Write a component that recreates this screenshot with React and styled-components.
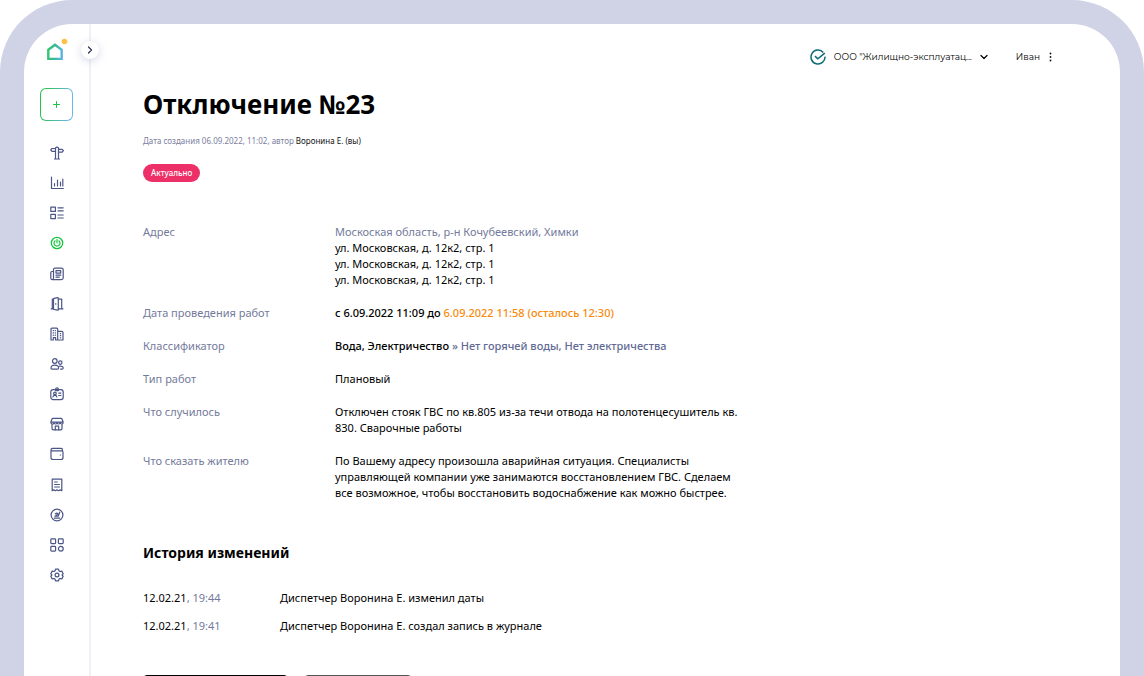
import React from "react";
import styled, { createGlobalStyle } from "styled-components";

const GlobalStyle = createGlobalStyle`
  *, *::before, *::after { box-sizing: border-box; }
  body {
    margin: 0;
    background: #fff;
    color: #000;
    font: 400 11px/16px "Noto Sans", sans-serif;
  }
  h1, h2, p, dl, dd, ul { margin: 0; padding: 0; }
  button { font: inherit; cursor: pointer; }
`;

const Frame = styled.div`
  height: 100vh;
  overflow: hidden;
  padding: 24px 24px 0;
  border-radius: 72px 72px 0 0;
  background: #d0d3e6;
`;

const Panel = styled.div`
  display: flex;
  min-height: 100%;
  border-radius: 48px 48px 0 0;
  background: #fff;
`;

const Sidebar = styled.aside`
  position: relative;
  flex: 0 0 67px;
  display: flex;
  flex-direction: column;
  align-items: center;
  padding-top: 14px;
  border-right: 2px solid #f0f0f7;
`;

const LogoLink = styled.a`
  display: block;
  width: 22px;
  height: 24px;
  svg { display: block; }
`;

const CollapseButton = styled.button`
  position: absolute;
  top: 17px;
  right: -10px;
  display: grid;
  place-items: center;
  width: 18px;
  height: 18px;
  padding: 0;
  border: 0;
  border-radius: 50%;
  background: #fff;
  color: #2b3157;
  box-shadow: 0 2px 8px rgba(96, 104, 168, 0.25);
`;

const AddButton = styled.button`
  display: grid;
  place-items: center;
  width: 33px;
  height: 33px;
  margin-top: 26px;
  padding: 0;
  border: 1px solid transparent;
  border-radius: 6px;
  background:
    linear-gradient(#fff, #fff) padding-box,
    linear-gradient(100deg, #27c24c 10%, #6db7ea 90%) border-box;
  color: #1fbf4a;
`;

const NavList = styled.ul`
  display: flex;
  flex-direction: column;
  justify-content: space-between;
  height: 438px;
  margin-top: 24px;
  list-style: none;
`;

const NavLink = styled.a`
  display: grid;
  place-items: center;
  width: 16px;
  height: 16px;
  color: ${({ $active }) => ($active ? "#17c440" : "#4b5586")};
`;

const Main = styled.main`
  flex: 1;
  min-width: 0;
  padding: 24px 67px 0 52px;
`;

const Header = styled.header`
  display: flex;
  justify-content: flex-end;
  align-items: center;
  gap: 28px;
  height: 18px;
  font: 400 9px/16px Montserrat, Inter, sans-serif;
`;

const HeaderButton = styled.button`
  display: flex;
  align-items: center;
  gap: 8px;
  padding: 0;
  border: 0;
  background: none;
  color: #000;
  white-space: nowrap;
`;

const Title = styled.h1`
  margin-top: 20px;
  font-size: 26px;
  line-height: 36px;
  font-weight: 700;
`;

const Meta = styled.p`
  margin-top: 13px;
  font-size: 8px;
  line-height: 12px;
  color: #7b80a0;
`;

const Author = styled.span`
  color: #111;
`;

const Badge = styled.span`
  display: block;
  width: fit-content;
  margin-top: 17px;
  padding: 0 8px;
  border-radius: 9px;
  background: #ee3068;
  color: #fff;
  font-size: 8px;
  line-height: 18px;
  font-weight: 500;
`;

const Details = styled.dl`
  display: flex;
  flex-direction: column;
  gap: 17px;
  margin-top: 42px;
`;

const DetailRow = styled.div`
  display: grid;
  grid-template-columns: 192px minmax(0, 408px);
`;

const Term = styled.dt`
  color: #747a9b;
`;

const Value = styled.dd`
  font-weight: ${({ $strong }) => ($strong ? 500 : 400)};
`;

const Muted = styled.span`
  color: #747a9b;
`;

const Category = styled.span`
  color: #626a94;
`;

const Deadline = styled.span`
  color: #f98a0c;
`;

const SectionTitle = styled.h2`
  margin-top: 42px;
  font-size: 14px;
  line-height: 20px;
  font-weight: 700;
`;

const HistoryTable = styled.table`
  margin-top: 27px;
  border-collapse: collapse;
  td { padding: 0 0 12px; }
  td:first-child { width: 137px; }
`;

const Actions = styled.div`
  display: flex;
  gap: 16px;
  margin-top: 29px;
`;

const ActionButton = styled.button`
  flex: none;
  width: ${({ $primary }) => ($primary ? "145px" : "108px")};
  height: 34px;
  border: 1px solid ${({ $primary }) => ($primary ? "#000" : "#555")};
  border-radius: 4px;
  background: ${({ $primary }) => ($primary ? "#000" : "#fff")};
`;

const Icon = ({ children, size = 14, width = 1 }) => (
  <svg width={size} height={size} viewBox={`0 0 ${size} ${size}`} fill="none" stroke="currentColor"
    strokeWidth={width} strokeLinecap="round" strokeLinejoin="round" aria-hidden="true">
    {children}
  </svg>
);

const navItems = [
  ["Навигация", <><path d="M5.5 13V1.8Q7 .3 8.5 1.8V13ZM4.5 13h5" /><path d="M5.5 2.500H2L.7 3.900 2 5.300h3.500M8.500 3.300h3.700l1.200 1.400-1.200 1.400H8.500" /></>],
  ["Статистика", <path d="M1.500 1v11.500h11.800M4.500 10V7.500M7.500 10V4M10.500 10V6M12.800 10V3" />],
  ["Заявки", <><rect x=".8" y="1.2" width="4.6" height="4.2" /><rect x=".8" y="8.4" width="4.6" height="4.2" /><path d="M8 1.800h5.200M8 4.800h5.200M8 9h5.200M8 12h5.200" /></>],
  ["Отключения", <><circle cx="7" cy="7" r="5.7" strokeWidth="1.3" /><path d="M5.100 4.800a3 3 0 1 0 3.800 0M7 3.600v3.200" /></>],
  ["Новости", <><path d="M3.500 11V2.500Q3.500 1.200 5 1.200h6.500q1.700 0 1.700 1.600v8q0 1.800-1.800 1.800H2.300Q.8 12.600.8 11V5.500q0-1 1-1h1.600M3.500 11q0 1.600-1.200 1.600" /><rect x="6" y="3.7" width="4.7" height="2.4" /><path d="M6 8.200h4.800M6 10.200h3.300" /></>],
  ["Доступ", <><path d="M3.500 2.200H2.300v9.600H1.100M1.100 11.800h2.400M8.300 2.200h3.400v9.600H8.300M11.700 11.800h1.300" /><path d="M3.500 11.900V2.100q0-.6.600-.8l3.300-.7q.9-.1.9.7v11.400q0 .7-.9.500l-3.300-.7q-.6-.1-.6-.6ZM5.800 6.700v.5" /></>],
  ["Дома", <><path d="M1 13V2.200q0-1 1-1h4.700q1 0 1 1V13H5.600v-2.400H3.300V13ZM7.700 4.400h4q1.300 0 1.300 1.200V13H7.700" /><path d="M3.200 3.600h.3M5.200 3.600h.3M3.200 5.900h.3M5.200 5.900h.3M3.200 8.200h.3M5.200 8.200h.3M10.300 6.600h.4M10.300 8.700h.4M10.300 10.800h.4" /></>],
  ["Жители", <><circle cx="4.8" cy="4" r="2.3" /><circle cx="10.3" cy="5.6" r="1.7" /><path d="M1 11.100q0-2.900 3.800-2.900t3.800 2.900q0 1.100-1.100 1.100H2q-1 0-1-1.100ZM9.500 9.200q3.700-.4 3.700 1.800 0 1.200-1.200 1.200h-1.400" /></>],
  ["Сотрудники", <><rect x=".8" y="2.7" width="12.4" height="9.9" rx="2.3" /><path d="M5.600 2.700v-.5Q5.600.9 7 .9t1.400 1.300v1.400H5.600Z" /><circle cx="4.9" cy="6.4" r="1.3" /><path d="M2.900 10q.2-1.600 2-1.600t2 1.600M8.700 6.100h2.200M8.700 8.500h2.200" /></>],
  ["Магазин", <><path d="M3 1.400h8q.8 0 1.100.8l1.100 3H.8l1.100-3q.3-.8 1.100-.8ZM.8 5.200q0 1.800 1.600 1.800t1.500-1.500Q4 7 5.500 7T7 5.500Q7 7 8.500 7t1.600-1.500Q10.200 7 11.700 7q1.500 0 1.500-1.800M2 7v4.400q0 1.400 1.400 1.400h7.200q1.400 0 1.400-1.400V7" /><path d="M5.300 12.700V9.200h3.400v3.500" /></>],
  ["Платежи", <><path d="M1 3.300v7.200q0 2 2 2h8q2 0 2-2V5.300q0-1.500-1.500-1.500H2.700Q1 3.800 1 2.700q0-1.300 1.500-1.300h8.700q1.300 0 1.300 1.500v1" /><path d="M10.300 8h.3" /></>],
  ["Документы", <><path d="M2.200 1.200h9.600v11.500l-1.600-.8-1.600.8-1.600-.8-1.600.8-1.600-.8-1.600.8Z" /><path d="M4.600 4h2.700M4.600 6.500h4.800M4.600 9h4.800" /></>],
  ["Показания", <><circle cx="7" cy="7" r="5.9" /><path d="M4.300 10.200h5.400M4.900 8.200h3.300L9.800 4M5.300 5.900q1.500-1.400 2.600-.1L5.700 8" /></>],
  ["Сервисы", <><rect x=".8" y=".9" width="4.8" height="4.7" rx=".8" /><rect x="8.4" y=".9" width="4.8" height="4.7" rx=".8" /><rect x=".8" y="8.4" width="4.8" height="4.7" rx=".8" /><circle cx="10.8" cy="10.75" r="2.4" /></>],
  ["Настройки", <><path d="M5.500 1.200h3l.5 1.700 1.100.6 1.700-.4L13.200 5.700 12.100 7l1.100 1.300-1.400 2.600-1.700-.4-1.100.6-.5 1.700h-3L5 11.100l-1.100-.6-1.700.4L.8 8.300 1.900 7 .8 5.700l1.400-2.600 1.700.4L5 2.900Z" /><circle cx="7" cy="7" r="1.9" /></>],
];

const details = [
  ["Адрес", <><Muted>Москоская область, р-н Кочубеевский, Химки</Muted><br />ул. Московская, д. 12к2, стр. 1<br />ул. Московская, д. 12к2, стр. 1<br />ул. Московская, д. 12к2, стр. 1</>],
  ["Дата проведения работ", <>с 6.09.2022 11:09 до <Deadline>6.09.2022 11:58 (осталось 12:30)</Deadline></>, true],
  ["Классификатор", <>Вода, Электричество <Category>» Нет горячей воды, Нет электричества</Category></>, true],
  ["Тип работ", "Плановый"],
  ["Что случилось", "Отключен стояк ГВС по кв.805 из-за течи отвода на полотенцесушитель кв. 830. Сварочные работы"],
  ["Что сказать жителю", "По Вашему адресу произошла аварийная ситуация. Специалисты управляющей компании уже занимаются восстановлением ГВС. Сделаем все возможное, чтобы восстановить водоснабжение как можно быстрее."],
];

const history = [
  ["12.02.21", "19:44", "Диспетчер Воронина Е. изменил даты"],
  ["12.02.21", "19:41", "Диспетчер Воронина Е. создал запись в журнале"],
];

const Logo = () => (
  <svg width="22" height="24" viewBox="0 0 22 24" fill="none" aria-hidden="true">
    <defs>
      <linearGradient id="house" x1="1" y1="12" x2="18" y2="15" gradientUnits="userSpaceOnUse">
        <stop stopColor="#35c76a" />
        <stop offset=".45" stopColor="#37b994" />
        <stop offset="1" stopColor="#61b2f4" />
      </linearGradient>
    </defs>
    <path d="M2.300 11.800 9 6.800l6.700 5v9.100H2.300Z" stroke="url(#house)" strokeWidth="2.4" />
    <circle cx="18.500" cy="3.500" r="2.8" fill="#ffc145" />
  </svg>
);

export default function App() {
  return (
    <>
      <GlobalStyle />
      <Frame>
        <Panel>
          <Sidebar>
            <LogoLink href="#" aria-label="Главная"><Logo /></LogoLink>
            <CollapseButton aria-label="Развернуть меню">
              <Icon size={8} width={1.2}><path d="M2.500 1 5.500 4l-3 3" /></Icon>
            </CollapseButton>
            <AddButton aria-label="Создать">
              <Icon size={7}><path d="M3.500 .500v6M.500 3.500h6" /></Icon>
            </AddButton>
            <NavList>
              {navItems.map(([label, drawing]) => (
                <li key={label}>
                  <NavLink href="#" aria-label={label} $active={label === "Отключения"}>
                    <Icon width={1.2}>{drawing}</Icon>
                  </NavLink>
                </li>
              ))}
            </NavList>
          </Sidebar>
          <Main>
            <Header>
              <HeaderButton>
                <svg width="16" height="16" viewBox="0 0 16 16" fill="none" stroke="#0c6a75" strokeWidth="1.5" aria-hidden="true">
                  <path d="M13.300 3.400A7 7 0 1 0 15 7.600" />
                  <path d="m5 7.100 2.800 2.700 7-5.700" />
                </svg>
                ООО "Жилищно-эксплуатац...
                <Icon size={8} width={1.2}><path d="M1 2.500 4 5.500l3-3" /></Icon>
              </HeaderButton>
              <HeaderButton>
                Иван
                <svg width="5" height="10" viewBox="0 0 5 10" fill="#111" aria-hidden="true">
                  <circle cx="2.500" cy="1.500" r=".9" /><circle cx="2.500" cy="5" r=".9" /><circle cx="2.500" cy="8.500" r=".9" />
                </svg>
              </HeaderButton>
            </Header>
            <Title>Отключение №23</Title>
            <Meta>Дата создания 06.09.2022, 11:02, автор <Author>Воронина Е. (вы)</Author></Meta>
            <Badge>Актуально</Badge>
            <Details>
              {details.map(([term, value, strong]) => (
                <DetailRow key={term}>
                  <Term>{term}</Term>
                  <Value $strong={strong}>{value}</Value>
                </DetailRow>
              ))}
            </Details>
            <SectionTitle>История изменений</SectionTitle>
            <HistoryTable>
              <tbody>
                {history.map(([date, time, event]) => (
                  <tr key={time}>
                    <td>{date}<Muted>, {time}</Muted></td>
                    <td>{event}</td>
                  </tr>
                ))}
              </tbody>
            </HistoryTable>
            <Actions>
              <ActionButton $primary aria-label="Редактировать" />
              <ActionButton aria-label="Отменить" />
            </Actions>
          </Main>
        </Panel>
      </Frame>
    </>
  );
}
